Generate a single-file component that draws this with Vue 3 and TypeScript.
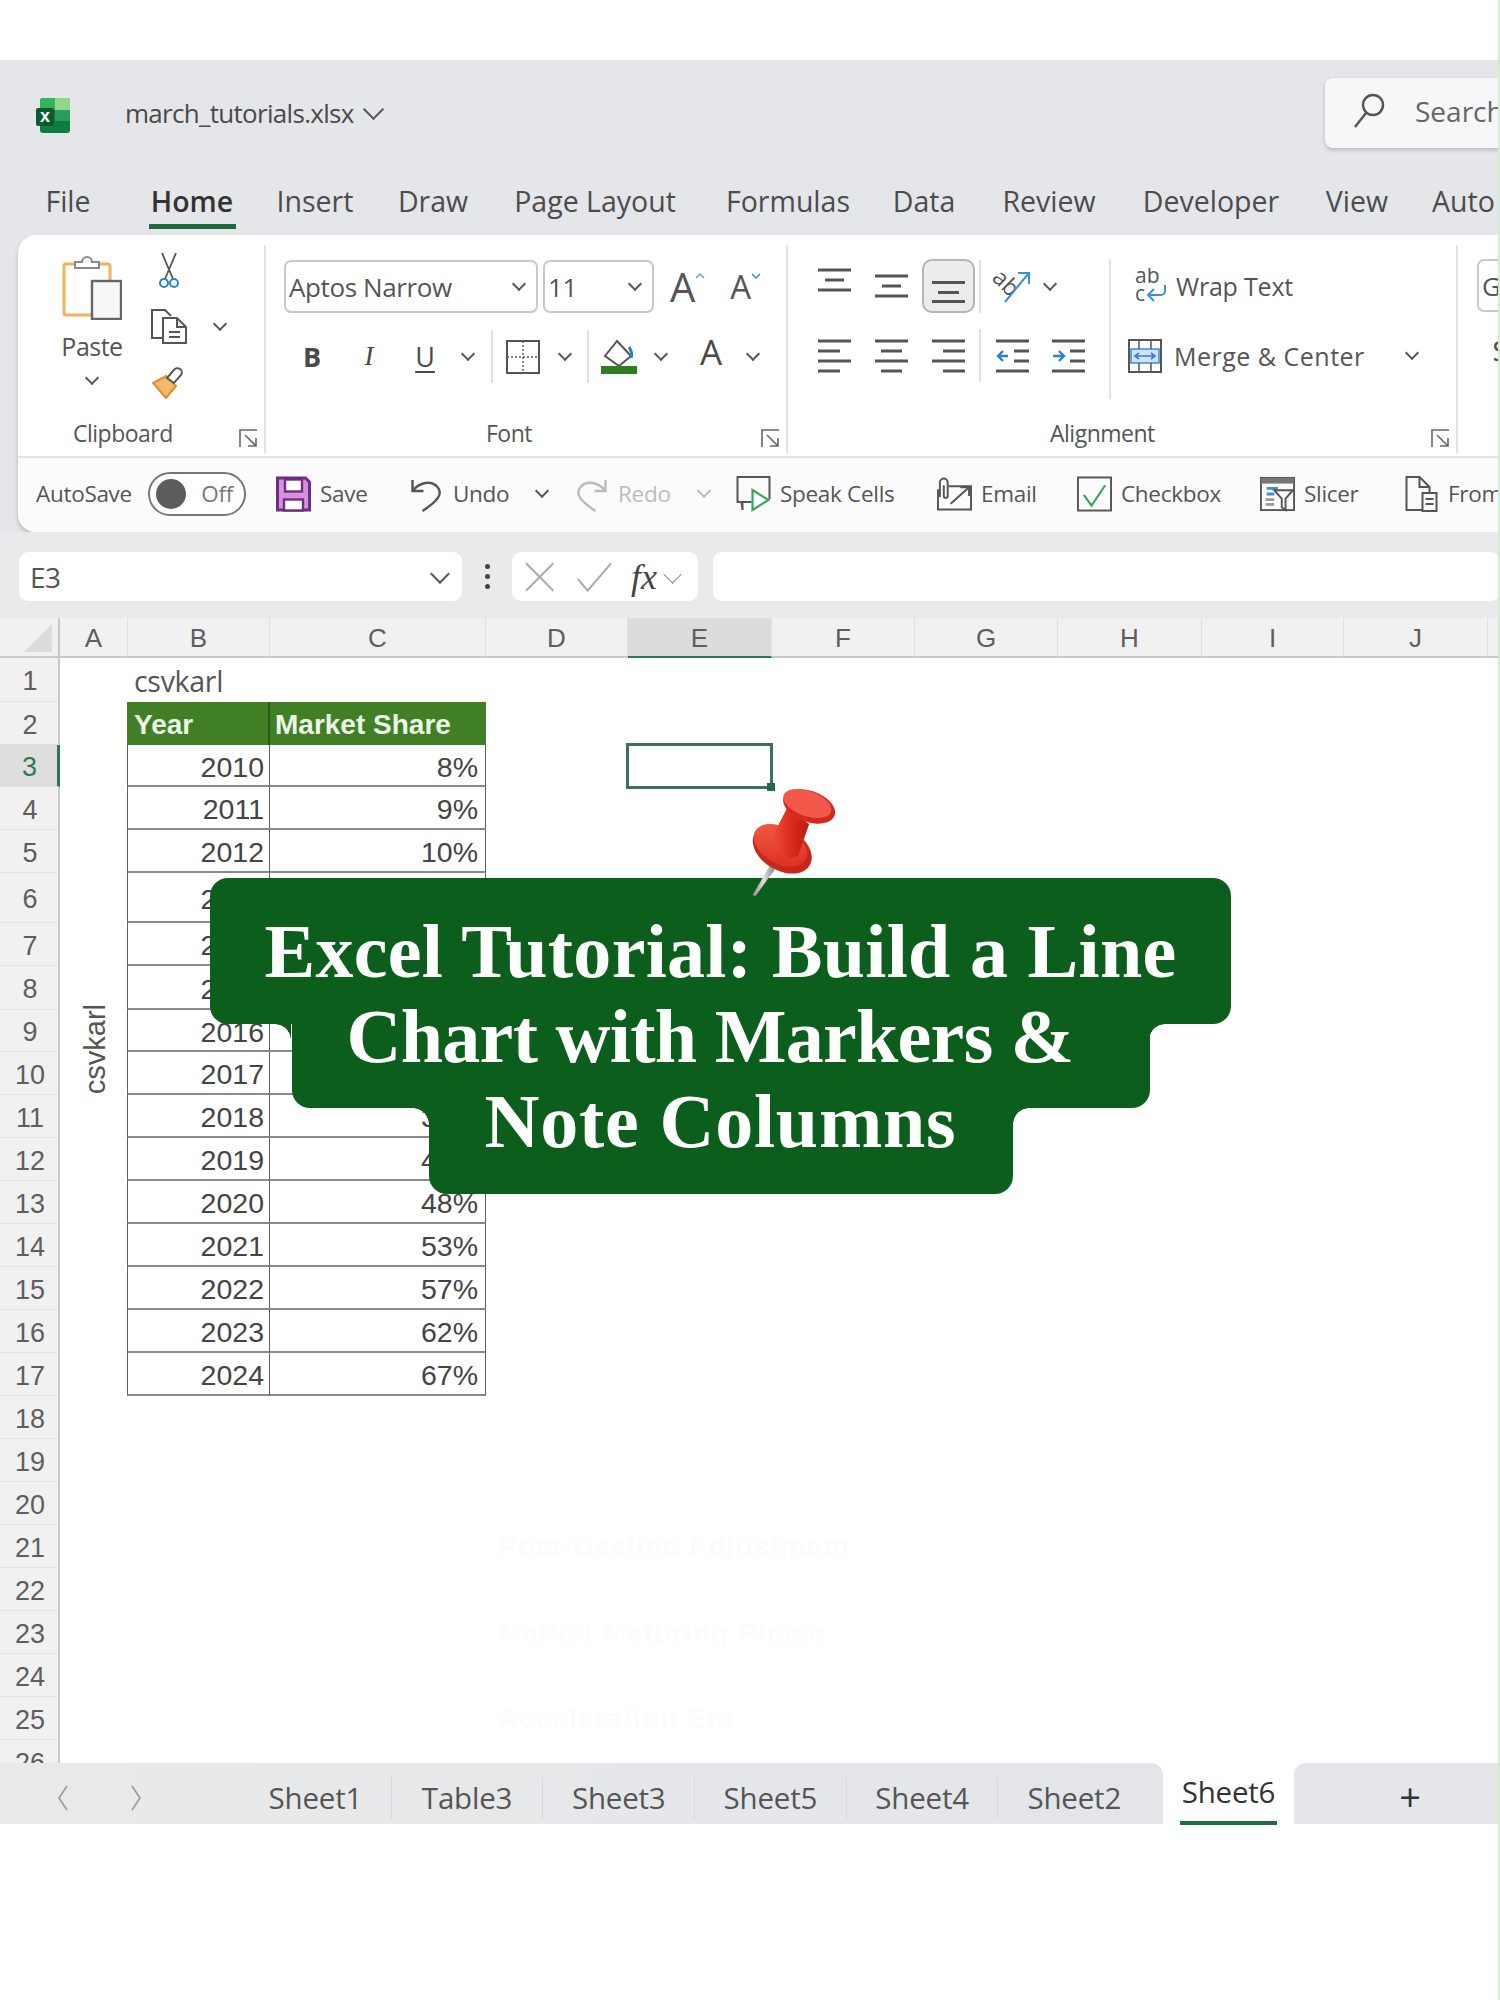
<script setup lang="ts">
/* Excel window mock: the sheet is one grid, everything else is flex rows */
const ribbonTabs = [
  { name: 'File', w: 100 },
  { name: 'Home', w: 148, active: true },
  { name: 'Insert', w: 98 },
  { name: 'Draw', w: 138 },
  { name: 'Page Layout', w: 186 },
  { name: 'Formulas', w: 200 },
  { name: 'Data', w: 72 },
  { name: 'Review', w: 178 },
  { name: 'Developer', w: 146 },
  { name: 'View', w: 146 },
  { name: 'Auto', w: 90 },
]

type Bar = [number, number, number]
const topRow: Bar[][] = [
  [[0, 33, 2], [7, 26, 12], [0, 33, 22]],
  [[0, 33, 8], [7, 26, 18], [0, 33, 28]],
]
const alignRow: Bar[][] = [
  [[0, 33, 2], [0, 22, 12], [0, 33, 22], [0, 22, 32]],
  [[0, 33, 2], [6, 27, 12], [0, 33, 22], [6, 27, 32]],
  [[0, 33, 2], [11, 33, 12], [0, 33, 22], [11, 33, 32]],
]

const colWidths = [60, 68, 142, 216, 142, 144, 143, 143, 144, 142, 144, 20]
const colLabels = ['', 'A', 'B', 'C', 'D', 'E', 'F', 'G', 'H', 'I', 'J']
const rowHeights = [40, 44, 43, 42, 43, 43, 50, 43, 44, 42, 43, 43, 43, 43, 43, 43, 43, 43, 43, 43, 43, 43, 43, 43, 43, 43, 43]
const rowLabels = Array.from({ length: 26 }, (_, i) => i + 1)

const gridStyle = {
  gridTemplateColumns: colWidths.map((w) => w + 'px').join(' '),
  gridTemplateRows: rowHeights.map((h) => h + 'px').join(' '),
}

const shares = ['8%', '9%', '10%', '13%', '17%', '22%', '27%', '32%', '38%', '43%', '48%', '53%', '57%', '62%', '67%']
const tableRows = shares.map((share, i) => ({ year: 2010 + i, share, row: i + 4 }))

const ghostNotes = [
  { text: 'Post-Decline Adjustment', row: 22 },
  { text: 'Market Maturing Phase', row: 24 },
  { text: 'Acceleration Era', row: 26 },
]

const sheetTabs = ['Sheet1', 'Table3', 'Sheet3', 'Sheet5', 'Sheet4', 'Sheet2']
</script>

<template>
  <div class="page">
    <div class="window">
      <!-- TITLE -->
      <div class="title-row">
        <svg class="logo" viewBox="0 0 34 35">
          <rect x="4" y="0" width="30" height="35" rx="3" fill="#107c41" />
          <path d="M4 3a3 3 0 0 1 3-3h12v12H4z" fill="#33b35a" />
          <path d="M19 0h12a3 3 0 0 1 3 3v9H19z" fill="#8fd68f" />
          <path d="M19 12h15v11H19z" fill="#2a9d5c" />
          <rect x="0" y="10" width="18" height="18" rx="2" fill="#0b5b2e" />
          <text x="9" y="24" class="logo-x">x</text>
        </svg>
        <span class="filename">march_tutorials.xlsx</span>
        <span class="chev chev-file"></span>
        <div class="search">
          <svg class="search-ico" viewBox="0 0 32 36" fill="none" stroke="#555" stroke-width="2.4">
            <circle cx="20" cy="12" r="10" />
            <path d="M13 20 2 34" />
          </svg>
          <span>Search</span>
        </div>
      </div>

      <!-- RIBBON TABS -->
      <div class="tabs-row">
        <div
          v-for="tab in ribbonTabs"
          :key="tab.name"
          class="tab"
          :class="{ 'tab-active': tab.active }"
          :style="{ width: tab.w + 'px' }"
        >
          <span>{{ tab.name }}</span>
        </div>
      </div>

      <!-- RIBBON -->
      <div class="ribbon">
        <div class="ribbon-top">
          <!-- Clipboard -->
          <section class="group group-clip">
            <div class="clip-body">
              <div class="paste">
                <svg class="paste-ico" viewBox="0 0 60 67" fill="none">
                  <rect x="2" y="11" width="46" height="51" rx="2" fill="#fff" stroke="#f0b35e" stroke-width="3" />
                  <path d="M13 15V9h7a5 5 0 0 1 10 0h7v6z" fill="#fff" stroke="#888" stroke-width="2" />
                  <rect x="30" y="28" width="29" height="38" fill="#f7f7f7" stroke="#666" stroke-width="2.4" />
                </svg>
                <span class="paste-label">Paste</span>
                <span class="chev"></span>
              </div>
              <div class="clip-tools">
                <svg class="scissors" viewBox="0 0 22 35" fill="none">
                  <path d="M4 0l11 26M18 0 7 26" stroke="#555" stroke-width="1.8" />
                  <circle cx="6" cy="30" r="4" stroke="#2f7fd0" stroke-width="2" />
                  <circle cx="16" cy="30" r="4" stroke="#2f7fd0" stroke-width="2" />
                </svg>
                <div class="copy-line">
                  <svg class="copy" viewBox="0 0 36 35" fill="none" stroke="#555" stroke-width="2">
                    <path d="M12 29H1V1h13l6 6" />
                    <path d="M12 9h14l9 9v16H12z" fill="#fff" />
                    <path d="M26 9v9h9M18 23h11M18 28h11" />
                  </svg>
                  <span class="chev"></span>
                </div>
                <svg class="painter" viewBox="0 0 34 33">
                  <path d="M14 10 24 20 14 32 1 17z" fill="#f4b86a" stroke="#e08a2e" stroke-width="2" />
                  <path d="M15 12 22 4a3 3 0 0 1 7 5l-7 8z" fill="#fff" stroke="#555" stroke-width="2" />
                </svg>
              </div>
            </div>
            <div class="group-foot">
              <span class="foot-clip">Clipboard</span>
              <svg class="launcher" viewBox="0 0 19 19" fill="none" stroke="#666" stroke-width="1.6">
                <path d="M1 18V1h17M6 6l11 11M17 9v8H9" />
              </svg>
            </div>
          </section>

          <!-- Font -->
          <section class="group group-font">
            <div class="font-row1">
              <div class="select select-font">Aptos Narrow<span class="chev chev-sm"></span></div>
              <div class="select select-size">11<span class="chev chev-sm"></span></div>
              <div class="grow-btn grow-up">
                <span>A</span>
                <svg viewBox="0 0 10 6" fill="none" stroke="#6aa3d8" stroke-width="1.6"><path d="M1 5l4-4 4 4" /></svg>
              </div>
              <div class="grow-btn grow-down">
                <span>A</span>
                <svg viewBox="0 0 10 6" fill="none" stroke="#3f8fd6" stroke-width="1.6"><path d="M1 1l4 4 4-4" /></svg>
              </div>
            </div>
            <div class="font-row2">
              <span class="fmt fmt-b">B</span>
              <span class="fmt fmt-i">I</span>
              <span class="fmt fmt-u">U</span>
              <span class="chev"></span>
              <i class="sep"></i>
              <svg class="borders" viewBox="0 0 34 34" fill="none" stroke="#555" stroke-width="2">
                <rect x="1" y="1" width="32" height="32" />
                <path d="M17 1v32M1 17h32" stroke-dasharray="2 2" stroke-width="1.4" />
              </svg>
              <span class="chev"></span>
              <i class="sep"></i>
              <svg class="fill" viewBox="0 0 36 35" fill="none">
                <path d="M16 2 30 17 18 27 4 17z" stroke="#555" stroke-width="2" />
                <path d="M28 8q4 6 2 11" stroke="#2f7fd0" stroke-width="3" />
                <rect x="0" y="27" width="36" height="8" fill="#2f7d1f" />
              </svg>
              <span class="chev"></span>
              <span class="fmt fmt-a">A</span>
              <span class="chev"></span>
            </div>
            <div class="group-foot">
              <span class="foot-font">Font</span>
              <svg class="launcher" viewBox="0 0 19 19" fill="none" stroke="#666" stroke-width="1.6">
                <path d="M1 18V1h17M6 6l11 11M17 9v8H9" />
              </svg>
            </div>
          </section>

          <!-- Alignment -->
          <section class="group group-align">
            <div class="align-main">
              <div class="align-left">
                <div class="align-row1">
                  <svg v-for="(bars, i) in topRow" :key="i" class="bars" viewBox="0 0 33 36">
                    <rect v-for="b in bars" :key="b[2]" :x="b[0]" :y="b[2] - 1.5" :width="b[1] - b[0]" height="3" fill="#555" />
                  </svg>
                  <div class="align-on">
                    <svg class="bars" viewBox="0 0 33 24">
                      <rect x="0" y="1" width="33" height="3" fill="#555" />
                      <rect x="6" y="11" width="21" height="3" fill="#555" />
                      <rect x="0" y="20" width="33" height="3" fill="#555" />
                    </svg>
                  </div>
                  <i class="sep"></i>
                  <svg class="orient" viewBox="0 0 38 34" fill="none">
                    <text x="0" y="19" class="orient-text" transform="rotate(45 10 12)">ab</text>
                    <path d="M12 33 35 5M25 4h11v11" stroke="#3f8fd6" stroke-width="2" />
                  </svg>
                  <span class="chev"></span>
                </div>
                <div class="align-row2">
                  <svg v-for="(bars, i) in alignRow" :key="i" class="bars" viewBox="0 0 33 34">
                    <rect v-for="b in bars" :key="b[2]" :x="b[0]" :y="b[2] - 1.5" :width="b[1] - b[0]" height="3" fill="#555" />
                  </svg>
                  <i class="sep"></i>
                  <svg class="bars" viewBox="0 0 33 34">
                    <path d="M0 2h33M18 12h15M18 22h15M0 32h33" stroke="#555" stroke-width="3" />
                    <path d="M12 17H2M7 12l-5 5 5 5" stroke="#2f7fd0" stroke-width="2.4" fill="none" />
                  </svg>
                  <svg class="bars" viewBox="0 0 33 34">
                    <path d="M0 2h33M18 12h15M18 22h15M0 32h33" stroke="#555" stroke-width="3" />
                    <path d="M1 17h10M7 12l5 5-5 5" stroke="#2f7fd0" stroke-width="2.4" fill="none" />
                  </svg>
                </div>
              </div>
              <i class="sep sep-tall"></i>
              <div class="align-right">
                <div class="wrap-line">
                  <svg class="wrap-ico" viewBox="0 0 32 36" fill="none">
                    <text x="0" y="15" class="wrap-text">ab</text>
                    <text x="0" y="33" class="wrap-text">c</text>
                    <path d="M30 17v6a4 4 0 0 1-4 4H14M19 21l-6 6 6 6" stroke="#3f8fd6" stroke-width="2" />
                  </svg>
                  <span class="wrap-label">Wrap Text</span>
                </div>
                <div class="merge-line">
                  <svg class="merge-ico" viewBox="0 0 34 34" fill="none">
                    <rect x="1" y="1" width="32" height="32" stroke="#555" stroke-width="2" />
                    <rect x="3" y="10" width="28" height="14" fill="#cfe4f6" stroke="#2f7fd0" stroke-width="1.4" />
                    <path d="M11 1v9M23 1v9M11 24v9M23 24v9" stroke="#555" stroke-width="1.5" />
                    <path d="M7 17h20M11 14l-4 3 4 3M23 14l4 3-4 3" stroke="#2f7fd0" stroke-width="1.6" />
                  </svg>
                  <span class="wrap-label merge-label">Merge &amp; Center</span>
                  <span class="chev chev-merge"></span>
                </div>
              </div>
            </div>
            <div class="group-foot">
              <span class="foot-align">Alignment</span>
              <svg class="launcher" viewBox="0 0 19 19" fill="none" stroke="#666" stroke-width="1.6">
                <path d="M1 18V1h17M6 6l11 11M17 9v8H9" />
              </svg>
            </div>
          </section>

          <!-- Number (cut off) -->
          <section class="group-number">
            <div class="select select-general">General</div>
            <span class="dollar">$</span>
          </section>
        </div>

        <!-- QUICK ACCESS -->
        <div class="qa-row">
          <span class="qa-auto">AutoSave</span>
          <div class="qa-item">
            <div class="toggle"><i class="knob"></i><span>Off</span></div>
          </div>
          <div class="qa-item">
            <svg class="qa-ico" viewBox="0 0 35 35">
              <path d="M1.5 1.5h28l4 4v28h-32z" fill="#d88fe0" stroke="#6f2f80" stroke-width="3" />
              <rect x="9" y="3" width="17" height="12" fill="#fff" stroke="#6f2f80" stroke-width="2.4" />
              <rect x="8" y="23" width="19" height="11" fill="#fff" stroke="#6f2f80" stroke-width="2.4" />
            </svg>
            <span>Save</span>
          </div>
          <div class="qa-item">
            <svg class="qa-ico" viewBox="0 0 34 36" fill="none" stroke="#555" stroke-width="2.4">
              <path d="M3 4v11h11" />
              <path d="M3 15C10 6 22 4 28 11c6 7 0 14-15 24" />
            </svg>
            <span>Undo</span>
          </div>
          <div class="qa-item qa-chev"><span class="chev"></span></div>
          <div class="qa-item qa-off">
            <svg class="qa-ico" viewBox="0 0 34 36" fill="none" stroke="#bbb" stroke-width="2.4">
              <path d="M31 4v11H20" />
              <path d="M31 15C24 6 12 4 6 11c-6 7 0 14 15 24" />
            </svg>
            <span>Redo</span>
          </div>
          <div class="qa-item qa-chev"><span class="chev chev-off"></span></div>
          <div class="qa-item">
            <svg class="qa-ico" viewBox="0 0 34 36" fill="none">
              <path d="M15 26H6v8l-1-8H1V1h32v22" stroke="#555" stroke-width="2" />
              <path d="M16 14v20l16-10z" fill="#fff" stroke="#3aa65a" stroke-width="2.2" />
            </svg>
            <span>Speak Cells</span>
          </div>
          <div class="qa-item">
            <svg class="qa-ico" viewBox="0 0 36 34" fill="none" stroke="#555" stroke-width="2">
              <path d="M12 9h23v24H1V12" />
              <path d="M3 20V5a4 4 0 0 1 8 0v14a2 2 0 0 1-4 0V8" />
              <path d="M14 27 33 10M24 10h9v9" />
            </svg>
            <span>Email</span>
          </div>
          <div class="qa-item">
            <svg class="qa-ico" viewBox="0 0 36 36" fill="none">
              <rect x="1" y="1" width="34" height="34" stroke="#555" stroke-width="2" />
              <path d="M7 19l8 11L29 9" stroke="#3aa65a" stroke-width="2.2" />
            </svg>
            <span>Checkbox</span>
          </div>
          <div class="qa-item">
            <svg class="qa-ico" viewBox="0 0 37 36" fill="none">
              <rect x="1" y="1" width="35" height="34" stroke="#555" stroke-width="2" />
              <rect x="1" y="1" width="35" height="6" fill="#777" />
              <path d="M7 12h12M7 18h8" stroke="#3f8fd6" stroke-width="3" />
              <path d="M6 24h9M6 29h9" stroke="#999" stroke-width="3" />
              <path d="M15 14h20l-8 9v12l-4-3V23z" fill="#fff" stroke="#555" stroke-width="2" />
            </svg>
            <span>Slicer</span>
          </div>
          <div class="qa-item">
            <svg class="qa-ico qa-from" viewBox="0 0 32 36" fill="none" stroke="#555" stroke-width="2">
              <path d="M17 34H1V1h13l10 10v6" />
              <path d="M14 1v10h10" />
              <rect x="17" y="17" width="14" height="18" />
              <path d="M20 23h8M20 28h8" />
            </svg>
            <span>From</span>
          </div>
        </div>
      </div>

      <!-- FORMULA BAR -->
      <div class="formula-row">
        <div class="name-box">E3<span class="chev chev-name"></span></div>
        <div class="dots"><i></i><i></i><i></i></div>
        <div class="fx-box">
          <svg class="fx-ico" viewBox="0 0 90 30" fill="none" stroke="#aaa" stroke-width="2">
            <path d="M1 1l28 28M29 1 1 29" />
            <path d="M54 17l10 12L88 1" />
          </svg>
          <span class="fx">fx</span>
          <span class="chev chev-fx"></span>
        </div>
        <div class="formula-input"></div>
      </div>

      <!-- SHEET -->
      <div class="sheet" :style="gridStyle">
        <div class="corner"><i></i></div>
        <div
          v-for="(label, i) in colLabels.slice(1)"
          :key="label"
          class="col-head"
          :class="{ 'col-head-on': label === 'E' }"
          :style="{ gridColumn: i + 2 }"
        >
          {{ label }}
        </div>
        <div class="col-head col-head-end"></div>

        <div
          v-for="n in rowLabels"
          :key="n"
          class="row-head"
          :class="{ 'row-head-on': n === 3 }"
          :style="{ gridRow: n + 1 }"
        >
          {{ n }}
        </div>

        <div class="cell-plain">csvkarl</div>
        <div class="side-label"><span>csvkarl</span></div>

        <div class="th th-year">Year</div>
        <div class="th th-share">Market Share</div>
        <template v-for="r in tableRows" :key="r.year">
          <div class="td td-year" :style="{ gridRow: r.row }">{{ r.year }}</div>
          <div class="td td-share" :style="{ gridRow: r.row }">{{ r.share }}</div>
        </template>

        <div class="selected"></div>

        <!-- nearly invisible leftovers of the later note column -->
        <div v-for="g in ghostNotes" :key="g.row" class="ghost" :style="{ gridRow: g.row }">{{ g.text }}</div>
      </div>

      <!-- SHEET TABS -->
      <div class="sheet-tabs">
        <div class="tabs-left">
          <div class="tab-nav">
            <svg viewBox="0 0 12 26" fill="none" stroke="#999" stroke-width="1.6"><path d="M10 1 2 13l8 12" /></svg>
            <svg viewBox="0 0 12 26" fill="none" stroke="#999" stroke-width="1.6"><path d="M2 1l8 12-8 12" /></svg>
          </div>
          <div v-for="s in sheetTabs" :key="s" class="sheet-tab">{{ s }}</div>
        </div>
        <div class="sheet-tab-on"><span>Sheet6</span></div>
        <div class="tabs-right"><span class="plus">+</span></div>
      </div>
    </div>

    <!-- TITLE BANNER -->
    <div class="banner">
      <div class="ban-line ban-1">Excel Tutorial: Build a Line</div>
      <div class="ban-line ban-2">Chart with Markers &amp;</div>
      <div class="ban-line ban-3">Note Columns</div>
      <i class="fillet fil-2l"></i>
      <i class="fillet fil-2r"></i>
      <i class="fillet fil-3l"></i>
      <i class="fillet fil-3r"></i>
    </div>

    <!-- PUSHPIN -->
    <svg class="pin" viewBox="0 0 95 115" preserveAspectRatio="none">
      <defs>
        <linearGradient id="pinHead" x1="0" y1="0" x2="1" y2="1">
          <stop offset="0" stop-color="#f4604c" />
          <stop offset="1" stop-color="#d8281c" />
        </linearGradient>
        <linearGradient id="pinStem" x1="0" y1="0" x2="1" y2="0">
          <stop offset="0" stop-color="#f04b38" />
          <stop offset="0.55" stop-color="#d92a1c" />
          <stop offset="1" stop-color="#b81c12" />
        </linearGradient>
        <linearGradient id="pinNeedle" x1="0" y1="0" x2="1" y2="0">
          <stop offset="0" stop-color="#8d8d8d" />
          <stop offset="0.5" stop-color="#dddddd" />
          <stop offset="1" stop-color="#8a8a8a" />
        </linearGradient>
      </defs>
      <path d="M24 82 29 87 8 114 5 113z" fill="url(#pinNeedle)" />
      <ellipse cx="37" cy="66" rx="34" ry="22" transform="rotate(27 37 66)" fill="#c8261a" />
      <ellipse cx="35" cy="62" rx="31" ry="19" transform="rotate(27 35 62)" fill="url(#pinHead)" />
      <path d="M42 24 66 40 54 73C44 78 26 68 26 54z" fill="url(#pinStem)" />
      <ellipse cx="66" cy="22" rx="29" ry="16" transform="rotate(18 66 22)" fill="#d42a1e" />
      <ellipse cx="64" cy="19" rx="27" ry="13" transform="rotate(18 64 19)" fill="#f2594a" />
    </svg>

    <i class="edge-line"></i>
  </div>
</template>

<style>
html,
body {
  margin: 0;
  background: #fff;
}
</style>

<style scoped>
/* =====================================================
   PAGE
   ===================================================== */
.page {
  position: relative;
  width: 1500px;
  height: 2000px;
  padding-top: 60px;
  box-sizing: border-box;
  overflow: hidden;
  background: #fff;
  font-family: 'Open Sans', 'Noto Sans', sans-serif;
  color: #444;
}
.window {
  display: flex;
  flex-direction: column;
  height: 1764px;
  background: #e4e6ea;
}
.edge-line {
  position: absolute;
  top: 0;
  right: 0;
  width: 2px;
  height: 2000px;
  background: #c9f2cf;
}

/* small chevron used everywhere */
.chev {
  display: inline-block;
  width: 8px;
  height: 8px;
  margin-top: -5px;
  border-right: 2px solid #555;
  border-bottom: 2px solid #555;
  transform: rotate(45deg);
  flex: none;
}
.chev-sm {
  margin-left: auto;
}
.chev-off {
  border-color: #bbb;
}
.sep {
  width: 2px;
  height: 53px;
  background: #e2e2e2;
}

/* =====================================================
   TITLE + TABS
   ===================================================== */
.title-row {
  display: flex;
  align-items: center;
  height: 106px;
  padding-left: 36px;
}
.logo {
  width: 34px;
  height: 35px;
  margin-top: 4px;
}
.logo-x {
  font: 700 18px 'Liberation Sans', sans-serif;
  fill: #fff;
  text-anchor: middle;
}
.filename {
  margin-left: 55px;
  font-size: 26px;
  letter-spacing: -0.7px;
  color: #4a4a4a;
}
.chev-file {
  width: 13px;
  height: 13px;
  margin: -8px 0 0 12px;
}
.search {
  display: flex;
  align-items: center;
  width: 175px;
  height: 70px;
  margin-left: auto;
  padding: 0 0 4px 28px;
  box-sizing: border-box;
  background: #f6f7f8;
  border-radius: 8px 0 0 8px;
  box-shadow: 0 2px 4px rgba(0, 0, 0, 0.2);
  font-size: 28px;
  color: #666;
  white-space: nowrap;
  overflow: hidden;
}
.search-ico {
  width: 32px;
  height: 36px;
  margin-right: 30px;
  flex: none;
}
.tabs-row {
  display: flex;
  height: 69px;
  padding-left: 18px;
  overflow: hidden;
}
.tab {
  display: flex;
  justify-content: center;
  flex: none;
  padding-top: 14px;
  font-size: 28.5px;
  color: #4c4c4c;
  box-sizing: border-box;
  white-space: nowrap;
}
.tab:last-child {
  justify-content: flex-start;
  padding-left: 2px;
}
.tab span {
  height: 44px;
  line-height: 42px;
}
.tab-active {
  font-weight: 600;
  color: #333;
}
.tab-active span {
  width: 87px;
  text-align: center;
  border-bottom: 5px solid #1f6b3f;
}

/* =====================================================
   RIBBON
   ===================================================== */
.ribbon {
  margin-left: 18px;
  height: 297px;
  background: #fff;
  border-radius: 18px 0 0 18px;
  box-shadow: 0 3px 5px rgba(0, 0, 0, 0.2);
  overflow: hidden;
}
.ribbon-top {
  display: flex;
  height: 221px;
}
.group {
  position: relative;
  flex: none;
  box-sizing: border-box;
  height: 208px;
  margin-top: 10px;
  border-right: 2px solid #e2e2e2;
}
.group-foot {
  position: absolute;
  left: 0;
  right: 0;
  bottom: 3px;
  height: 34px;
  display: flex;
  align-items: center;
  font-size: 23px;
  letter-spacing: -0.5px;
  color: #555;
}
.launcher {
  position: absolute;
  right: 6px;
  bottom: 2px;
  width: 19px;
  height: 19px;
}

/* Clipboard */
.group-clip {
  width: 248px;
}
.clip-body {
  display: flex;
  padding: 8px 0 0 40px;
}
.paste {
  display: flex;
  flex-direction: column;
  align-items: center;
  width: 68px;
}
.paste-ico {
  width: 60px;
  height: 67px;
}
.paste-label {
  margin-top: 11px;
  font-size: 25px;
  letter-spacing: -0.5px;
  line-height: 30px;
  color: #555;
}
.paste .chev {
  margin-top: 12px;
}
.clip-tools {
  margin-left: 25px;
  display: flex;
  flex-direction: column;
}
.scissors {
  width: 22px;
  height: 35px;
  margin-left: 7px;
}
.copy-line {
  display: flex;
  align-items: center;
  gap: 28px;
  margin-top: 21px;
}
.copy {
  width: 36px;
  height: 35px;
}
.painter {
  width: 34px;
  height: 33px;
  margin: 22px 0 0 1px;
}
.foot-clip {
  margin-left: 55px;
}

/* Font */
.group-font {
  width: 522px;
  padding: 15px 0 0 18px;
}
.font-row1 {
  display: flex;
  align-items: center;
  gap: 5px;
}
.select {
  display: flex;
  align-items: center;
  height: 53px;
  padding: 0 12px 0 3px;
  box-sizing: border-box;
  border: 2px solid #c8c8c8;
  border-radius: 7px;
  font-size: 26px;
  letter-spacing: -0.4px;
  color: #555;
  flex: none;
}
.select-font {
  width: 254px;
}
.select-size {
  width: 111px;
}
.grow-btn {
  display: flex;
  align-items: flex-start;
  font-size: 40px;
  color: #555;
  line-height: 44px;
}
.grow-btn svg {
  width: 10px;
  height: 6px;
  margin-top: 8px;
}
.grow-up {
  margin-left: 11px;
}
.grow-down {
  margin-left: 20px;
  font-size: 33px;
}
.font-row2 {
  display: grid;
  grid-template-columns: 52px 62px 50px 36px 12px 49px 36px 10px 52px 32px 68px 16px;
  align-items: center;
  justify-items: center;
  height: 53px;
  margin: 17px 0 0 2px;
}
.fmt {
  font-size: 27px;
  color: #4a4a4a;
}
.fmt-b {
  font-weight: 700;
}
.fmt-i {
  font-style: italic;
  font-family: 'Liberation Serif', serif;
}
.fmt-u {
  text-decoration: underline;
  text-underline-offset: 4px;
}
.fmt-a {
  font-size: 35px;
  margin-top: -10px;
}
.borders {
  width: 34px;
  height: 34px;
}
.fill {
  width: 36px;
  height: 35px;
}
.foot-font {
  margin-left: 220px;
}

/* Alignment */
.group-align {
  width: 670px;
  padding: 14px 0 0 18px;
}
.align-main {
  display: flex;
}
.align-left {
  width: 303px;
  flex: none;
}
.align-row1,
.align-row2 {
  display: grid;
  align-items: center;
  justify-items: center;
  height: 53px;
}
.align-row1 {
  grid-template-columns: 57px 56px 58px 6px 58px 18px;
}
.align-row2 {
  grid-template-columns: 57px 56px 58px 6px 58px 54px;
  margin-top: 17px;
}
.bars {
  width: 33px;
  height: 36px;
}
.align-row2 .bars {
  height: 34px;
}
.align-on {
  display: flex;
  align-items: flex-end;
  justify-content: center;
  box-sizing: border-box;
  width: 53px;
  height: 54px;
  padding-bottom: 7px;
  background: #ececec;
  border: 2px solid #b5b5b5;
  border-radius: 10px;
}
.align-on .bars {
  height: 24px;
}
.orient {
  width: 38px;
  height: 34px;
  overflow: visible;
}
.orient-text {
  font: 23px 'Open Sans', sans-serif;
  fill: #555;
}
.sep-tall {
  height: 140px;
  flex: none;
}
.align-right {
  padding-left: 20px;
}
.wrap-line,
.merge-line {
  display: flex;
  align-items: center;
  height: 53px;
}
.merge-line {
  width: 300px;
  margin: 17px 0 0 -3px;
}
.wrap-line {
  margin-left: 4px;
}
.wrap-ico {
  width: 32px;
  height: 36px;
  flex: none;
}
.wrap-text {
  font: 21px 'Open Sans', sans-serif;
  fill: #555;
}
.merge-ico {
  width: 34px;
  height: 34px;
  flex: none;
}
.wrap-label {
  margin-left: 9px;
  font-size: 25px;
  letter-spacing: -0.2px;
  color: #555;
  white-space: nowrap;
}
.merge-label {
  margin-left: 12px;
  letter-spacing: 0.5px;
}
.chev-merge {
  margin-left: auto;
  margin-right: 11px;
}
.foot-align {
  margin-left: 262px;
}

/* Number group, cut off at the right edge */
.group-number {
  padding: 24px 0 0 19px;
  overflow: hidden;
  flex: 1;
}
.select-general {
  width: 90px;
}
.dollar {
  display: block;
  margin: 17px 0 0 15px;
  font-size: 32px;
  color: #555;
}

/* Quick access row */
.qa-row {
  display: grid;
  grid-template-columns: 112px 128px 133px 121px 44px 118px 44px 201px 140px 183px 144px 78px;
  align-items: center;
  height: 76px;
  padding: 0 0 3px 18px;
  background: #fbfbfb;
  border-top: 2px solid #e4e4e4;
  box-sizing: border-box;
  font-size: 22.5px;
  letter-spacing: -0.3px;
  color: #555;
  white-space: nowrap;
}
.qa-item {
  display: flex;
  align-items: center;
  gap: 9px;
}
.qa-chev {
  padding-left: 7px;
}
.qa-off {
  color: #bbb;
}
.qa-ico {
  width: 35px;
  height: 36px;
  flex: none;
}
.toggle {
  display: flex;
  align-items: center;
  justify-content: space-between;
  box-sizing: border-box;
  width: 98px;
  height: 44px;
  padding: 0 11px 0 6px;
  border: 2px solid #777;
  border-radius: 22px;
  background: #fff;
  color: #777;
}
.knob {
  width: 30px;
  height: 30px;
  border-radius: 50%;
  background: #5c5c5c;
}

/* =====================================================
   FORMULA BAR
   ===================================================== */
.formula-row {
  display: flex;
  align-items: flex-start;
  height: 86px;
  padding: 20px 0 0 19px;
  box-sizing: border-box;
  background: #e8eaec;
}
.name-box,
.fx-box,
.formula-input {
  height: 49px;
  background: #fff;
  border-radius: 9px;
}
.name-box {
  display: flex;
  align-items: center;
  width: 443px;
  padding: 0 15px 0 11px;
  box-sizing: border-box;
  font-size: 28px;
  letter-spacing: -0.5px;
  color: #555;
}
.chev-name {
  width: 12px;
  height: 12px;
  margin-left: auto;
}
.dots {
  display: flex;
  flex-direction: column;
  align-items: center;
  justify-content: center;
  gap: 5px;
  width: 50px;
  height: 49px;
}
.dots i {
  width: 5px;
  height: 5px;
  background: #444;
  border-radius: 50%;
}
.fx-box {
  display: flex;
  align-items: center;
  width: 186px;
  padding-left: 13px;
  box-sizing: border-box;
}
.fx-ico {
  width: 88px;
  height: 30px;
  flex: none;
}
.fx {
  margin-left: 18px;
  font: italic 36px 'Liberation Serif', serif;
  color: #444;
  line-height: 40px;
}
.chev-fx {
  width: 12px;
  height: 12px;
  margin-left: 9px;
  border-width: 0 1.5px 1.5px 0;
  border-color: #888;
}
.formula-input {
  flex: 1;
  margin-left: 15px;
}

/* =====================================================
   SHEET
   ===================================================== */
.sheet {
  display: grid;
  flex: none;
  height: 1145px;
  overflow: hidden;
  background: #fff;
  font-family: 'Liberation Sans', Arial, sans-serif;
  font-size: 28.5px;
}
.corner {
  grid-row: 1;
  grid-column: 1;
  position: relative;
  background: #f1f1f1;
  border-bottom: 2px solid #c9c9c9;
  border-right: 2px solid #c9c9c9;
  box-sizing: border-box;
}
.corner i {
  position: absolute;
  right: 6px;
  bottom: 4px;
  width: 28px;
  height: 28px;
  background: #dcdcdc;
  clip-path: polygon(100% 0, 100% 100%, 0 100%);
}
.col-head {
  grid-row: 1;
  display: flex;
  align-items: center;
  justify-content: center;
  padding-top: 2px;
  background: #f1f1f1;
  border-bottom: 2px solid #c9c9c9;
  border-right: 1px solid #e0e0e0;
  box-sizing: border-box;
  font-size: 26px;
  color: #5e5e5e;
}
.col-head-on {
  background: #dcdcdc;
  border-bottom: 2px solid #2c7a50;
}
.col-head-end {
  grid-column: 12;
}
.row-head {
  grid-column: 1;
  display: flex;
  align-items: center;
  justify-content: center;
  padding: 4px 0 0 2px;
  background: #f1f1f1;
  border-right: 2px solid #c9c9c9;
  border-bottom: 1px solid #e2e2e2;
  box-sizing: border-box;
  font-size: 27px;
  color: #5e5e5e;
}
.row-head-on {
  background: #dedede;
  border-right: 3px solid #2c7a50;
  color: #2c7a50;
}
.cell-plain {
  grid-row: 2;
  grid-column: 3;
  display: flex;
  align-items: center;
  padding: 2px 0 0 6px;
  font-family: 'Open Sans', sans-serif;
  font-size: 28.5px;
  letter-spacing: -0.3px;
  color: #555;
}
.side-label {
  grid-row: 3 / 19;
  grid-column: 2;
  display: flex;
  align-items: center;
  justify-content: center;
  padding-left: 3px;
}
.side-label span {
  writing-mode: vertical-rl;
  transform: rotate(180deg);
  font-size: 29px;
  color: #555;
}
.th {
  grid-row: 3;
  display: flex;
  align-items: center;
  padding: 3px 0 0 6px;
  background: #407f26;
  border-right: 2px solid #2d5a1b;
  color: #eef7e6;
  font-weight: 700;
  font-size: 28px;
}
.th-year {
  grid-column: 3;
  margin-left: -1px;
  border-left: 1px solid #407f26;
}
.th-share {
  grid-column: 4;
  padding-left: 5px;
  border-right-color: #407f26;
}
.td {
  display: flex;
  align-items: center;
  justify-content: flex-end;
  padding: 4px 7px 0 0;
  box-sizing: border-box;
  border-bottom: 2px solid #8a8a8a;
  border-right: 1.5px solid #5f5f5f;
  color: #444;
}
.td-year {
  grid-column: 3;
  margin-left: -1px;
  padding-right: 5px;
  border-left: 1.5px solid #5f5f5f;
}
.td-share {
  grid-column: 4;
}
.selected {
  grid-row: 4;
  grid-column: 6;
  position: relative;
  box-sizing: border-box;
  margin: -2px -1px 0 -2px;
  height: 46px;
  border: 3px solid #3c7358;
}
.selected::after {
  content: '';
  position: absolute;
  right: -5px;
  bottom: -5px;
  width: 8px;
  height: 8px;
  background: #1f6b4a;
}
.ghost {
  grid-column: 5 / 9;
  display: flex;
  align-items: center;
  padding-left: 12px;
  font-size: 28px;
  font-weight: 700;
  letter-spacing: 1px;
  color: #fcfcfc;
  white-space: nowrap;
}

/* =====================================================
   SHEET TABS
   ===================================================== */
.sheet-tabs {
  display: flex;
  height: 61px;
  flex: none;
  background: #fff;
  font-size: 29.5px;
  letter-spacing: -0.2px;
  color: #555;
}
.tabs-left {
  display: flex;
  align-items: center;
  width: 1163px;
  flex: none;
  padding-top: 8px;
  box-sizing: border-box;
  background: linear-gradient(90deg, #e9eaea, #e3e5ea);
  border-top-right-radius: 12px;
}
.tab-nav {
  display: flex;
  gap: 61px;
  width: 240px;
  padding-left: 57px;
  box-sizing: border-box;
  flex: none;
}
.tab-nav svg {
  width: 12px;
  height: 26px;
}
.sheet-tab {
  width: 151.7px;
  flex: none;
  line-height: 42px;
  text-align: center;
  border-right: 1px solid #d6d8dc;
  box-sizing: border-box;
}
.sheet-tab:last-child {
  border-right: none;
}
.sheet-tab-on {
  width: 131px;
  flex: none;
  display: flex;
  justify-content: center;
  color: #333;
  font-weight: 500;
}
.sheet-tab-on span {
  height: 52px;
  width: 97px;
  margin-top: 6px;
  line-height: 46px;
  text-align: center;
  border-bottom: 4px solid #1f6f45;
}
.tabs-right {
  flex: 1;
  display: flex;
  justify-content: center;
  align-items: center;
  background: #e4e6ea;
  border-top-left-radius: 12px;
}
.plus {
  margin: 4px 0 0 26px;
  font-size: 38px;
  color: #333;
}

/* =====================================================
   BANNER + PIN (lie over the sheet)
   ===================================================== */
.banner {
  position: absolute;
  top: 878px;
  left: 210px;
  width: 1021px;
  display: flex;
  flex-direction: column;
  align-items: center;
  font-family: 'Liberation Serif', 'DejaVu Serif', serif;
  font-weight: 700;
  font-size: 76px;
  line-height: 85px;
  color: #fff;
  text-align: center;
}
.ban-line {
  box-sizing: border-box;
  background: #0b5e1c;
  border-radius: 18px;
  white-space: nowrap;
}
.ban-1 {
  width: 1021px;
  padding: 31px 0 30px;
  margin-bottom: -30px;
  letter-spacing: 0.3px;
}
.ban-2 {
  width: 858px;
  padding: 0 21px 29px 0;
  margin-bottom: -29px;
  letter-spacing: -0.7px;
}
.ban-3 {
  width: 584px;
  padding-bottom: 30px;
  letter-spacing: 0.8px;
}
.fillet {
  position: absolute;
  width: 16px;
  height: 16px;
}
.fil-2l,
.fil-3l {
  background: radial-gradient(circle at 0 100%, transparent 15.5px, #0b5e1c 16px);
}
.fil-2r,
.fil-3r {
  background: radial-gradient(circle at 100% 100%, transparent 15.5px, #0b5e1c 16px);
}
.fil-2l {
  top: 146px;
  left: 65px;
}
.fil-2r {
  top: 146px;
  left: 939px;
}
.fil-3l {
  top: 230px;
  left: 203px;
}
.fil-3r {
  top: 230px;
  left: 803px;
}
.pin {
  position: absolute;
  top: 785px;
  left: 748px;
  width: 88px;
  height: 112px;
}
</style>
